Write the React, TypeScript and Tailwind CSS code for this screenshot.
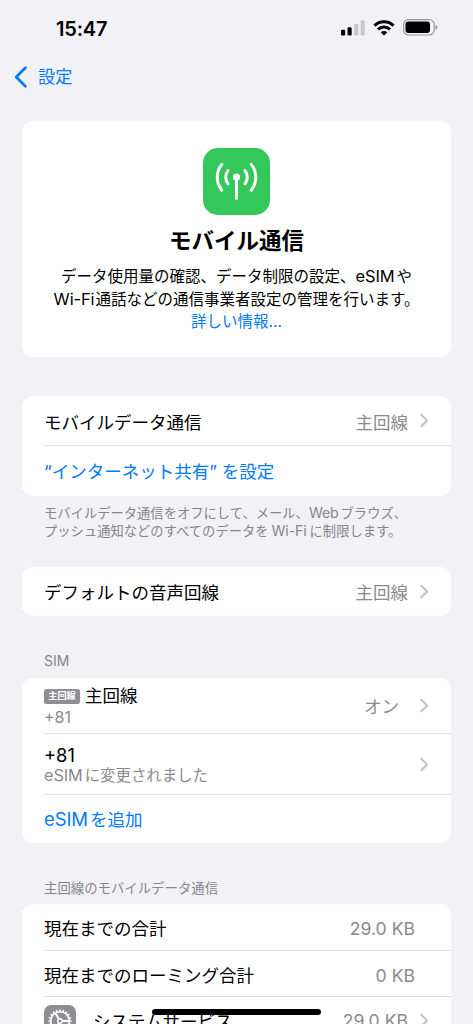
import type { ReactNode } from "react";

function Latin({ children, className = "" }: { children: ReactNode; className?: string }) {
  return <span className={`text-[1.06em] leading-none tracking-[-0.1px] ${className}`}>{children}</span>;
}

function Chevron() {
  return (
    <svg width="9" height="15" viewBox="0 0 9 15" fill="none" className="shrink-0">
      <path d="M1.3 1.8 7.1 7.5 1.3 13.2" stroke="#c3c3c6" strokeWidth="2.1" strokeLinecap="round" strokeLinejoin="round" />
    </svg>
  );
}

function Divider() {
  return <div className="ml-[22px] h-px shrink-0 bg-[#e1e1e4]" />;
}

function StatusBar() {
  return (
    <header className="flex h-[55px] shrink-0 items-center justify-between pl-[56px] pr-[35px]">
      <div className="pt-[2px] text-[20px] leading-6 font-semibold tracking-[-0.2px]">15:47</div>
      <div className="flex items-center">
        <svg width="24" height="16" viewBox="0 0 24 16">
          <rect x="0" y="9.7" width="4.2" height="5.8" rx="1.3" />
          <rect x="6.5" y="7.3" width="4.2" height="8.2" rx="1.3" />
          <rect x="13.1" y="3.8" width="4.2" height="11.7" rx="1.3" fill="#c7c7cb" />
          <rect x="19.6" y="0.2" width="4.2" height="15.3" rx="1.3" fill="#c7c7cb" />
        </svg>
        <svg width="22" height="16" viewBox="0 0 22 16" className="ml-[8px]" fill="none" stroke="#000" strokeWidth="2.9">
          <path d="M1.4 5.6A13.8 13.8 0 0 1 20.6 5.6" />
          <path d="M4.9 9.4A8.8 8.8 0 0 1 17.1 9.4" />
          <path d="M7.8 12.4a4.6 4.6 0 0 1 6.4 0L11 15.6Z" fill="#000" stroke="none" />
        </svg>
        <svg width="35" height="17" viewBox="0 0 35 17" className="ml-[8px]">
          <rect x="0.6" y="0.6" width="30.6" height="15.4" rx="5" fill="none" stroke="#98989c" strokeWidth="1.2" />
          <rect x="2.5" y="2.6" width="24.5" height="11.4" rx="3" />
          <path d="M32.5 5.7c2.6.9 2.6 4.3 0 5.2Z" fill="#98989c" />
        </svg>
      </div>
    </header>
  );
}

function CellularIcon() {
  return (
    <div className="flex h-[67px] w-[67px] items-center justify-center rounded-[15px] bg-[#34c759]">
      <svg width="67" height="67" viewBox="0 0 67 67" fill="none" stroke="#fff" strokeWidth="3" strokeLinecap="round">
        <circle cx="33.5" cy="29" r="3.6" fill="#fff" stroke="none" />
        <path d="M33.5 30V50.2" />
        <path d="M25 22.6a10.6 10.6 0 0 0 0 13.2M42 22.6a10.6 10.6 0 0 1 0 13.2" />
        <path d="M18.8 16.4a20.5 20.5 0 0 0 0 25.8M48.2 16.4a20.5 20.5 0 0 1 0 25.8" />
      </svg>
    </div>
  );
}

function GearIcon() {
  const teeth = Array.from({ length: 20 }, (_, i) => i * 18);
  return (
    <div className="h-8 w-8 shrink-0 rounded-[7px] bg-[#8e8e93]">
      <svg width="32" height="32" viewBox="0 0 32 32" fill="none" stroke="#fff">
        <circle cx="16" cy="16" r="9.2" strokeWidth="1.6" />
        {teeth.map((a) => (
          <path key={a} d="M16 4.4V6.8" strokeWidth="1.6" transform={`rotate(${a} 16 16)`} />
        ))}
        <circle cx="16" cy="16" r="2.2" strokeWidth="1.4" />
        <path d="M18.2 16H25M14.9 14.1 11.5 8.2M14.9 17.9 11.5 23.8" strokeWidth="1.9" />
      </svg>
    </div>
  );
}

export default function App() {
  return (
    <div className="relative flex h-[1024px] w-[473px] flex-col overflow-hidden bg-[#f2f1f6] font-['Inter','Noto_Sans_CJK_JP',sans-serif] text-[17.5px] leading-6 whitespace-nowrap text-black" lang="ja">
      <StatusBar />
      <nav className="flex h-[66px] shrink-0 items-center pb-[22px] pl-[14px] text-[#007aff]">
        <svg width="14" height="22" viewBox="0 0 14 22" fill="none">
          <path d="M11.4 1.8 2.2 11l9.2 9.2" stroke="#007aff" strokeWidth="2.7" strokeLinecap="round" strokeLinejoin="round" />
        </svg>
        <span className="ml-[10px] text-[17.2px]">設定</span>
      </nav>

      <main className="flex flex-col px-[22px]">
        <section className="flex h-[236px] shrink-0 flex-col items-center rounded-[11px] bg-white pt-[27px]">
          <CellularIcon />
          <h1 className="mt-[10px] text-[22.5px] leading-8 font-bold">モバイル通信</h1>
          <p className="mt-[9px] text-center text-[15.5px] leading-[22.5px]">
            データ使用量の確認、データ制限の設定、<Latin className="mr-[2px]">eSIM</Latin>や<br />
            <Latin className="mr-[1px]">Wi-Fi</Latin>通話などの通信事業者設定の管理を行います。<br />
            <span className="text-[#007aff]">詳しい情報...</span>
          </p>
        </section>

        <section className="mt-[39px] flex h-[100px] shrink-0 flex-col rounded-[11px] bg-white">
          <div className="flex h-[49px] items-center pr-[22px] pl-[22px]">
            <span className="flex-1 pt-[4px]">モバイルデータ通信</span>
            <span className="mr-[12px] pt-[4px] text-[#8a8a8e]">主回線</span>
            <Chevron />
          </div>
          <Divider />
          <div className="flex flex-1 items-center px-[22px] pt-[2px] text-[#007aff]">“インターネット共有” を設定</div>
        </section>
        <p className="mt-[8px] pl-[22px] text-[13.3px] leading-[18px] text-[#85858b]">
          モバイルデータ通信をオフにして、メール、<Latin className="mr-[2px]">Web</Latin>ブラウズ、<br />
          プッシュ通知などのすべてのデータを<Latin className="mx-[3px]">Wi-Fi</Latin>に制限します。
        </p>

        <section className="mt-[27px] flex h-[49px] shrink-0 items-center rounded-[11px] bg-white px-[22px]">
          <span className="flex-1 pt-[2px]">デフォルトの音声回線</span>
          <span className="mr-[12px] pt-[2px] text-[#8a8a8e]">主回線</span>
          <Chevron />
        </section>

        <h2 className="mt-[36px] pl-[22px] text-[14px] leading-[18px] text-[#85858b]">SIM</h2>
        <section className="mt-[8px] flex h-[165px] shrink-0 flex-col rounded-[11px] bg-white">
          <div className="flex h-[55px] items-center px-[22px]">
            <div className="flex-1 pt-px">
              <div className="flex h-[22px] items-center">
                <span className="mr-[5px] flex h-[15px] w-[36px] items-center justify-center rounded-[2.5px] bg-[#8e8e93] text-[9.2px] font-bold text-white">主回線</span>
                <span>主回線</span>
              </div>
              <div className="h-[20px] text-[16px] leading-[20px] text-[#8a8a8e]">+81</div>
            </div>
            <span className="mr-[21px] pt-[2px] text-[#8a8a8e]">オン</span>
            <Chevron />
          </div>
          <Divider />
          <div className="flex h-[60px] items-center px-[22px]">
            <div className="flex-1 pt-[2px]">
              <div className="text-[18.3px] leading-[22px]">+81</div>
              <div className="text-[15.4px] leading-[20px] text-[#8a8a8e]"><Latin className="mr-[2px]">eSIM</Latin>に変更されました</div>
            </div>
            <Chevron />
          </div>
          <Divider />
          <div className="flex flex-1 items-center px-[22px] pt-[1px] text-[#007aff]"><span><Latin className="mr-[2px]">eSIM</Latin>を追加</span></div>
        </section>

        <h2 className="mt-[36px] pl-[22px] text-[13.4px] leading-[18px] text-[#85858b]">主回線のモバイルデータ通信</h2>
        <section className="mt-[7px] flex h-[140px] shrink-0 flex-col rounded-t-[11px] bg-white">
          <div className="flex h-[47px] items-center justify-between pt-[4px] pr-[36px] pl-[22px]">
            <span>現在までの合計</span>
            <span className="text-[17.6px] text-[#8a8a8e]">29.0 KB</span>
          </div>
          <Divider />
          <div className="flex h-[46px] items-center justify-between pt-[4px] pr-[36px] pl-[22px]">
            <span>現在までのローミング合計</span>
            <span className="text-[17.6px] text-[#8a8a8e]">0 KB</span>
          </div>
          <Divider />
          <div className="flex h-[48px] items-center pr-[22px] pl-[22px]">
            <GearIcon />
            <span className="ml-[17px] flex-1 pt-[2px]">システムサービス</span>
            <span className="mr-[12px] text-[17.6px] text-[#8a8a8e]">29.0 KB</span>
            <Chevron />
          </div>
        </section>
      </main>
      <div className="absolute top-[1009px] left-[152px] h-[6px] w-[169px] rounded-full bg-black" />
    </div>
  );
}
